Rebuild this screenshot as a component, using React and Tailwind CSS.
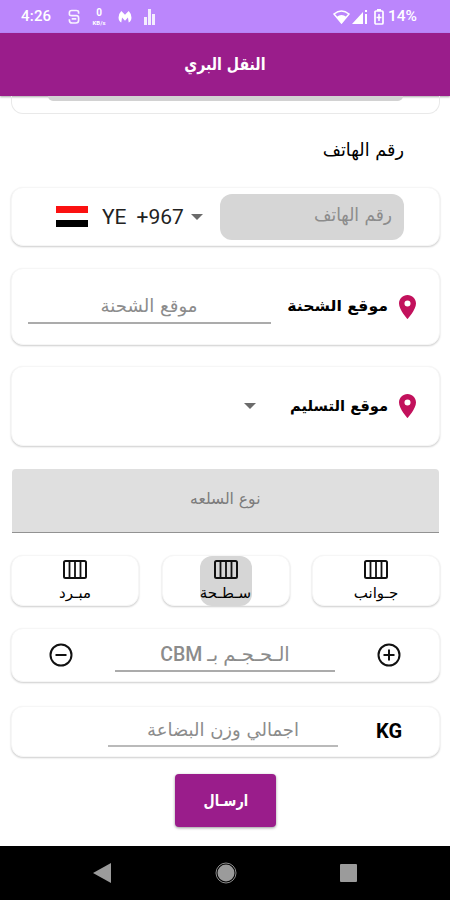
const ARABIC = "font-['DejaVu_Sans',sans-serif] whitespace-nowrap inline-block"
const CARD = 'bg-white rounded-xl border border-[#f6f6f6] shadow-[0_1px_2px_rgba(0,0,0,0.2)]'

function Caret() {
  return (
    <svg width="12" height="6" viewBox="0 0 12 6" className="shrink-0">
      <path d="M0 0h12L6 6z" fill="#6b6b6b" />
    </svg>
  )
}

function Pin() {
  return (
    <svg width="17" height="24" viewBox="5 2 14 20" preserveAspectRatio="none" className="shrink-0">
      <path d="M12 2C8.13 2 5 5.13 5 9c0 5.25 7 13 7 13s7-7.75 7-13c0-3.87-3.13-7-7-7zm0 9.5a2.5 2.5 0 0 1 0-5 2.5 2.5 0 0 1 0 5z" fill="#c2115c" />
    </svg>
  )
}

function Columns() {
  return (
    <svg width="24" height="19" viewBox="0 0 24 19" fill="none" stroke="#111" strokeWidth="2">
      <rect x="1" y="1" width="22" height="17" rx="1.5" />
      <path d="M6.5 1v17M12 1v17M17.5 1v17" strokeWidth="1.8" />
    </svg>
  )
}

function CircleIcon({ plus }) {
  return (
    <svg width="24" height="24" viewBox="0 0 24 24" fill="none" stroke="#111" strokeWidth="2">
      <circle cx="12" cy="12" r="10.5" />
      <path d={plus ? 'M6.5 12h11M12 6.5v11' : 'M6.5 12h11'} />
    </svg>
  )
}

function StatusBar() {
  return (
    <div className="h-[33px] bg-[#bb86fc] flex items-center text-white font-['Roboto',sans-serif] font-medium text-[15px] pl-[21px] pr-8">
      <span className="w-[47px] tracking-[0.2px]">4:26</span>
      <svg width="12" height="16" viewBox="0 0 13 17" fill="none" stroke="#fff" strokeWidth="1.8" opacity=".9">
        <path d="M11.5 5V3.5Q11.5 1.5 9 1.5H4Q1.5 1.5 1.5 4v1.5Q1.5 7 4 7h5q2.500 0 2.500 2.500V12q0 3-3 3H4.500q-3 0-3-3v-1M4 10.500h5" />
      </svg>
      <div className="ml-2.5 w-[18px] flex flex-col items-center">
        <span className="text-[10px] leading-[12px] font-bold">0</span>
        <span className="text-[6px] leading-[8px] font-bold">KB/s</span>
      </div>
      <svg width="14" height="12" viewBox="0 0 14 13" className="ml-[10px]">
        <path d="M3 0 7 4 11 0q3 3 3 7t-3 5.500L10.200 7 7 10.500 3.800 7 3 12.500Q0 11 0 7t3-7z" fill="#fff" />
      </svg>
      <svg width="12" height="16" viewBox="0 0 12 16" className="ml-3" fill="#fff" opacity=".85">
        <path d="M0 8h3v8H0zM4 0h3v16H4zM8 5h3v11H8z" />
      </svg>
      <svg width="17" height="14" viewBox="0 0 17 14" className="ml-auto">
        <path d="M1 4Q8.500-2 16 4L8.500 13z" fill="none" stroke="#fff" strokeWidth="1.500" />
        <path d="M3.500 7q5-4 10 0l-5 6.500z" fill="#fff" />
      </svg>
      <svg width="15" height="14" viewBox="0 0 15 14" className="ml-[2px]" fill="#fff">
        <path d="M0 14 11 2v12zM13 0h2v2h-2zM13 4h2v10h-2z" />
      </svg>
      <svg width="10" height="16" viewBox="0 0 10 16" className="ml-[7px]">
        <path d="M3 0h4v2H3z" fill="#fff" />
        <rect x="1" y="2" width="8" height="13" rx="1" fill="none" stroke="#fff" strokeWidth="1.700" />
        <path d="M5 5v7M2.500 8.500h5" stroke="#fff" strokeWidth="1.500" />
      </svg>
      <span className="ml-[4px] w-[30px] whitespace-nowrap text-[15.5px]">14%</span>
    </div>
  )
}

function TruckType({ label, selected }) {
  return (
    <div className={`${CARD} w-32 h-[51px] flex justify-center`}>
      <div className={selected ? 'w-[52px] h-[50px] bg-[#d6d6d6] rounded-xl flex flex-col items-center pt-[4px]' : 'w-[52px] h-[50px] flex flex-col items-center pt-[4px]'}>
        <Columns />
        <span dir="rtl" className={`${ARABIC} text-[15px] leading-[18px] text-black mt-[5px]`}>{label}</span>
      </div>
    </div>
  )
}

export default function App() {
  return (
    <div className="w-[450px] h-[900px] bg-white flex flex-col overflow-hidden">
      <StatusBar />
      <header className="h-[63px] bg-[#9a1d8b] flex items-center justify-center shadow-[0_1px_2px_rgba(0,0,0,0.35)]">
        <h1 dir="rtl" className={`${ARABIC} text-[17px] font-bold text-white scale-x-[0.83]`}>النقل البري</h1>
      </header>

      <main className="h-[750px] flex flex-col pr-[10px] pl-[11px]">
        <div className="h-[18px] shrink-0 rounded-b-xl border border-t-0 border-[#e9e9e9] px-9">
          <div className="h-[5px] bg-[#d2d2d2] rounded-b-lg" />
        </div>

        <div dir="rtl" className="h-[73px] pr-9 flex items-center">
          <span className={`${ARABIC} text-[18px] text-black origin-right scale-x-[0.98] -mt-0.5`}>رقم الهاتف</span>
        </div>

        <div className={`${CARD} h-[59px] shrink-0 flex items-center pl-[44px]`}>
          <div className="w-8 h-[21px] flex flex-col justify-between">
            <div className="h-[7px] bg-[#fb1111]" />
            <div className="h-[7px] bg-black" />
          </div>
          <div className="ml-[14px] w-[89px] flex gap-[10px] font-['Roboto',sans-serif] text-[21px] text-[#222] pt-0.5">
            <span>YE</span>
            <span>+967</span>
          </div>
          <Caret />
          <div dir="rtl" className="ml-[17px] w-[184px] h-[46px] bg-[#d6d6d6] rounded-xl pr-3 flex items-center">
            <span className={`${ARABIC} text-[18px] text-[#8c8c8c] origin-right scale-x-[0.94] -mt-1`}>رقم الهاتف</span>
          </div>
        </div>

        <div className={`${CARD} mt-[22px] h-[77px] shrink-0 flex items-center pl-4`}>
          <div className="w-[243px] h-[34px] border-b-2 border-[#ababab] flex justify-center items-center">
            <span dir="rtl" className={`${ARABIC} text-[18px] text-[#8c8c8c] scale-x-[1.01]`}>موقع الشحنة</span>
          </div>
          <div dir="rtl" className="ml-[17px] w-[100px] flex">
            <span className={`${ARABIC} text-[15px] font-bold text-black origin-right scale-x-[1.05]`}>موقع الشحنة</span>
          </div>
          <div className="ml-[11px]"><Pin /></div>
        </div>

        <div className={`${CARD} mt-[21px] h-[80px] shrink-0 flex items-center pl-[232px]`}>
          <Caret />
          <div dir="rtl" className="ml-[32px] w-[100px] flex">
            <span className={`${ARABIC} text-[15px] font-bold text-black origin-right scale-x-[0.98]`}>موقع التسليم</span>
          </div>
          <div className="ml-[11px]"><Pin /></div>
        </div>

        <div className="mt-[23px] h-16 shrink-0 mx-px bg-[#dfdfdf] rounded-t border-b border-[#929292] flex items-center justify-center">
          <span dir="rtl" className={`${ARABIC} text-[16px] text-[#7c7c7c] scale-x-[0.97] -mt-1`}>نوع السلعه</span>
        </div>

        <div className="mt-[22px] flex justify-between">
          <TruckType label="مبـرد" />
          <TruckType label="سـطـحة" selected />
          <TruckType label="جـوانب" />
        </div>

        <div className={`${CARD} mt-[22px] h-[54px] shrink-0 flex items-center pl-[37px]`}>
          <CircleIcon />
          <div className="ml-[42px] w-[220px] h-[36px] -mt-0.5 border-b-2 border-[#ababab] flex justify-center items-center">
            <span dir="rtl" className="font-['Roboto','DejaVu_Sans',sans-serif] whitespace-nowrap text-[19.5px] text-[#8c8c8c] mt-1">
              الـحـجـم بـ <span className="font-medium">CBM</span>
            </span>
          </div>
          <div className="ml-[42px]"><CircleIcon plus /></div>
        </div>

        <div className={`${CARD} mt-6 h-[51px] shrink-0 flex items-center pl-24`}>
          <div className="w-[230px] h-[34px] -mt-[3px] border-b-2 border-[#bababa] flex justify-center items-center">
            <span dir="rtl" className={`${ARABIC} text-[18px] text-[#8c8c8c]`}>اجمالي وزن البضاعة</span>
          </div>
          <span className="ml-[38px] -mt-0.5 font-['Roboto',sans-serif] font-bold text-[20px] text-black">KG</span>
        </div>

        <button dir="rtl" className="mt-[17px] self-center w-[101px] h-[53px] shrink-0 rounded bg-[#9a1d8b] text-white shadow-[0_1px_3px_rgba(0,0,0,0.4)]">
          <span className={`${ARABIC} text-[16px] font-bold scale-x-[0.8]`}>ارسـال</span>
        </button>
      </main>

      <nav className="h-[54px] shrink-0 bg-black flex items-center pl-[93px]">
        <svg width="18" height="20" viewBox="0 0 18 20"><path d="M0 10 18 0v20z" fill="#9b9b9b" /></svg>
        <svg width="22" height="22" viewBox="0 0 22 22" className="ml-[104px]">
          <circle cx="11" cy="11" r="10" fill="none" stroke="#8c8c8c" />
          <circle cx="11" cy="11" r="8.500" fill="#9b9b9b" />
        </svg>
        <div className="ml-[103px] w-[17px] h-[18px] bg-[#9b9b9b] rounded-[1px]" />
      </nav>
    </div>
  )
}
